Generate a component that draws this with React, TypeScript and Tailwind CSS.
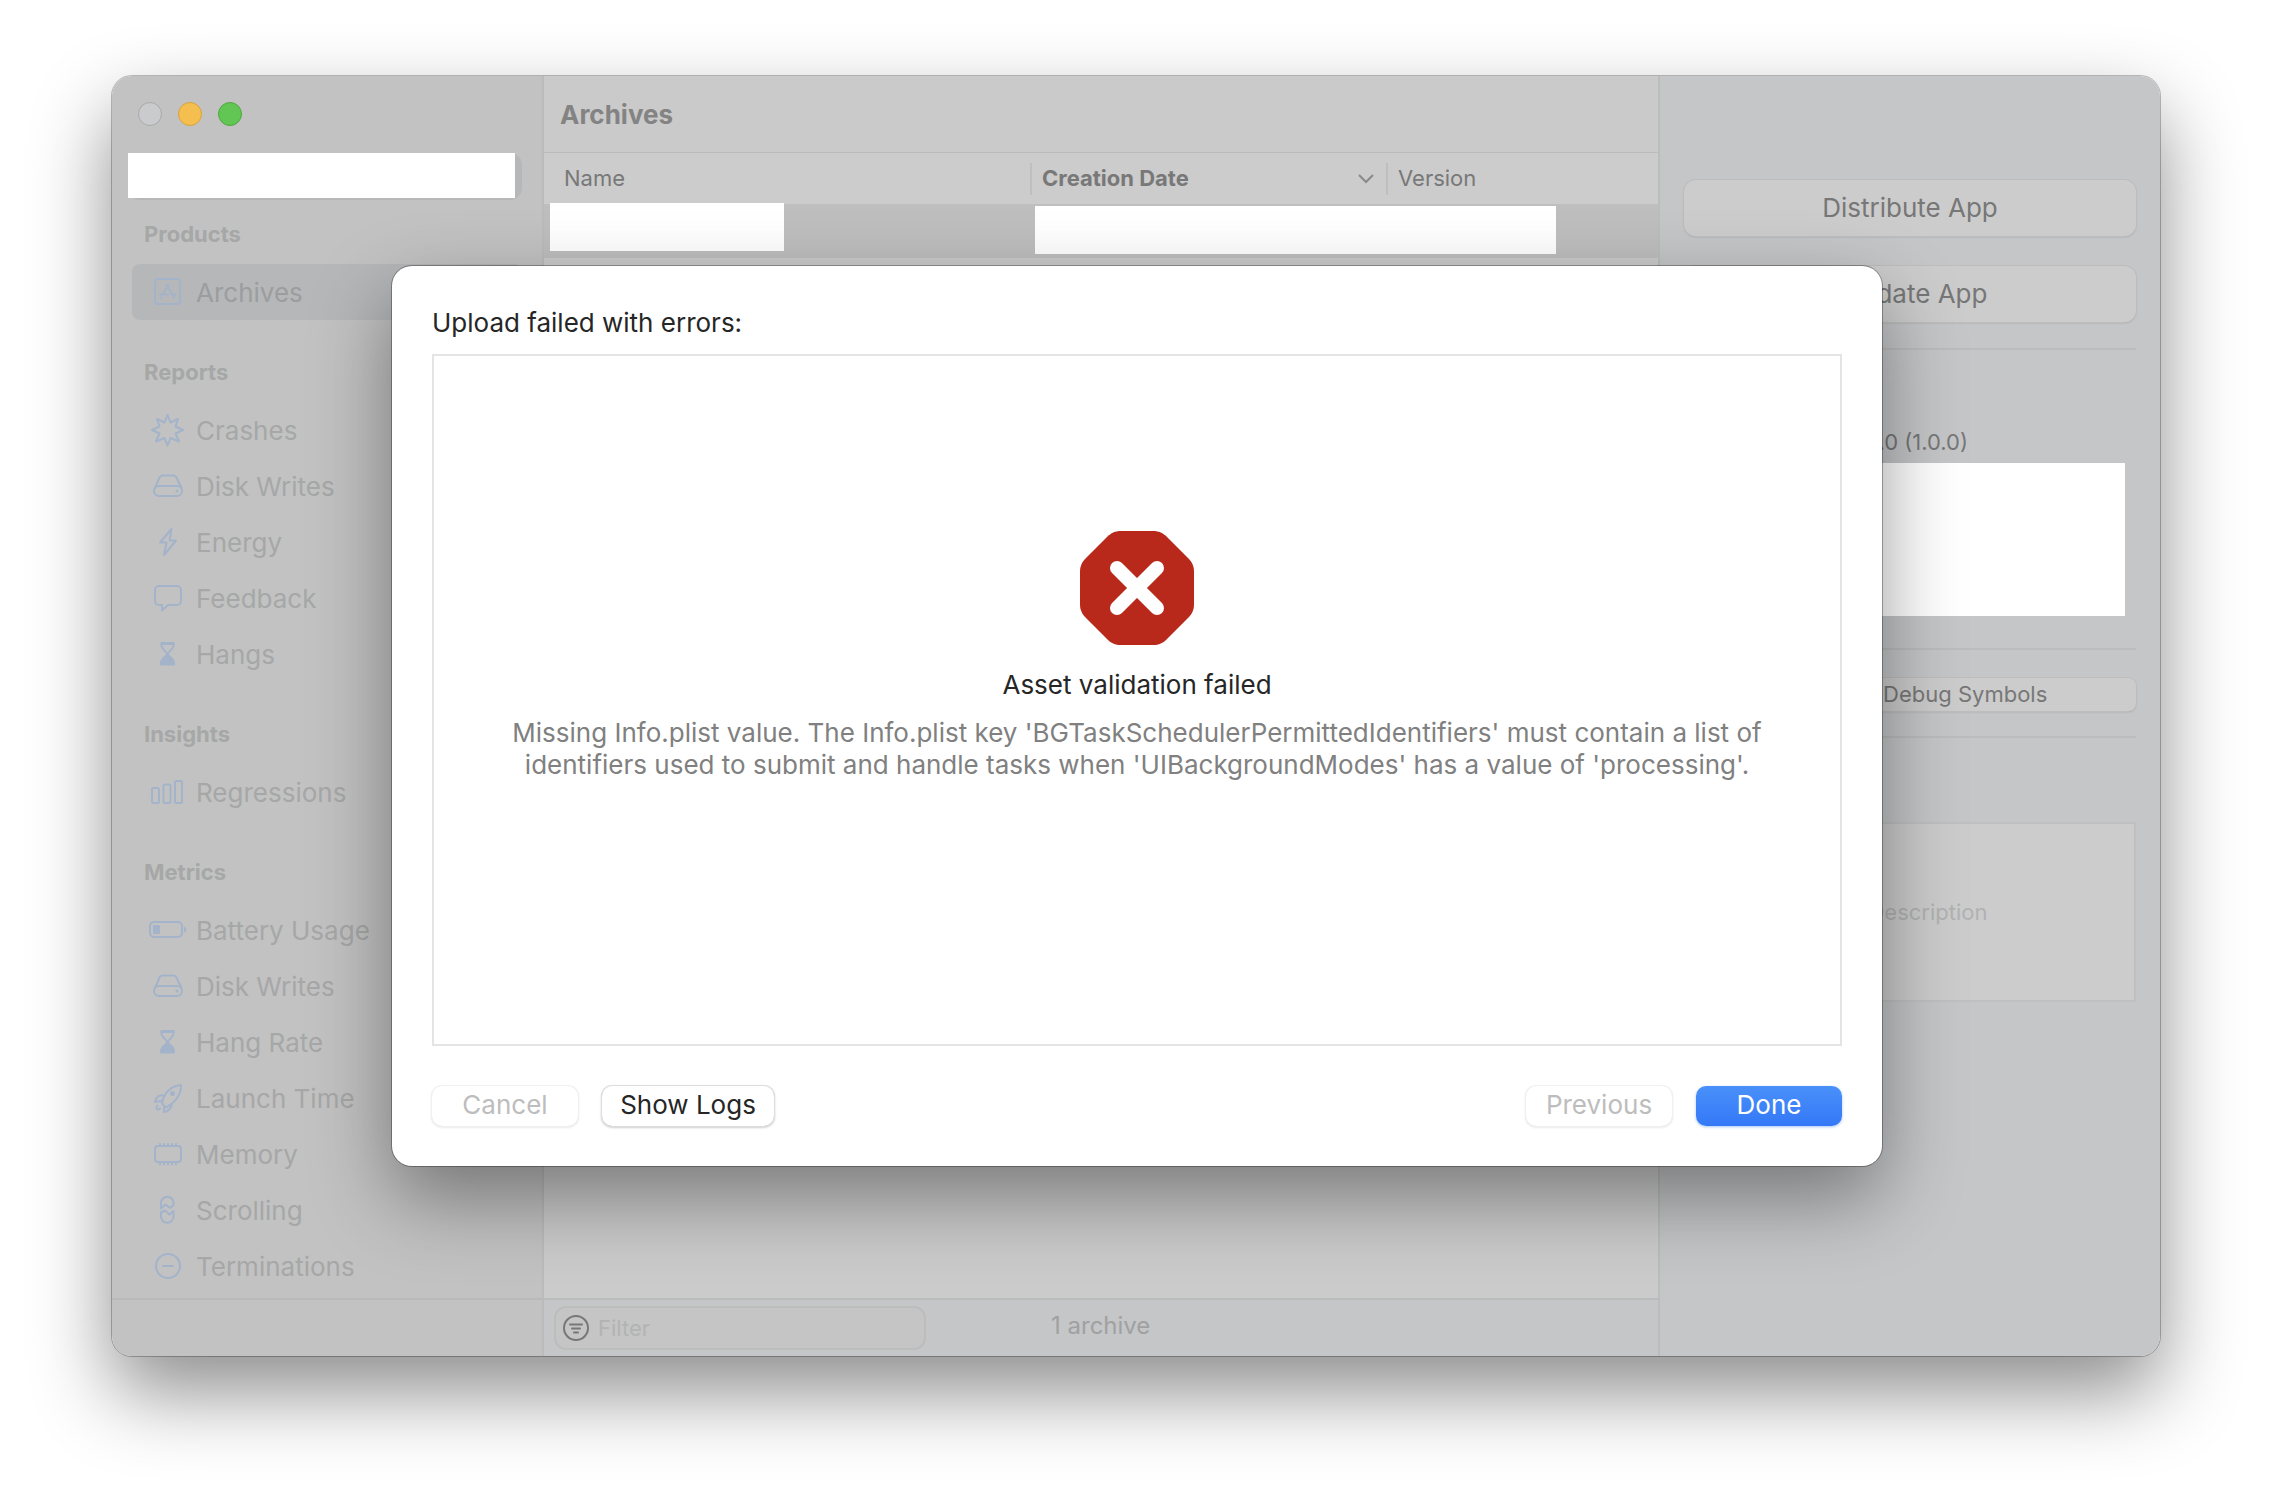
import type { ReactNode } from 'react';

type Item = { label: string; icon: ReactNode; active?: boolean };
type Section = { title: string; items: Item[] };

function Icon({ children }: { children: ReactNode }) {
  return (
    <svg
      className="h-10 w-10 shrink-0 text-[#a3b3ca]"
      viewBox="0 0 40 40"
      fill="none"
      stroke="currentColor"
      strokeWidth="2"
      strokeLinecap="round"
      strokeLinejoin="round"
      aria-hidden="true"
    >
      {children}
    </svg>
  );
}

const archivesIcon = (
  <Icon>
    <rect x="7" y="7" width="25" height="25" rx="3" />
    <path d="M18.500 13l7.500 12.500M20.500 13l-5.500 9.500M12 22.500h8M24.500 22.500h3M13.500 25.500l-.5 1" />
  </Icon>
);

const crashesIcon = (
  <Icon>
    <path d="M19.500 5l3 7.500 7.500-3.500-2.500 7.500 7.500 3.500-7.500 3.500 3.500 8-8.500-3.500-3 7.500-3-7.500-8.500 3.500 3.500-8-7.500-3.500 7.500-3.500-2.500-7.500 7.500 3.500z" />
  </Icon>
);

const diskIcon = (
  <Icon>
    <path d="M7 22l4.500-10.500c.6-1.400 1.500-2 3-2h11c1.500 0 2.400.6 3 2L33.500 22" />
    <rect x="6" y="20" width="28" height="10" rx="5" />
    <circle cx="29" cy="25" r="1.500" fill="currentColor" stroke="none" />
  </Icon>
);

const energyIcon = (
  <Icon>
    <path d="M23.500 7L12 20.500h6.500L16 33l12-14.500h-6.500z" />
  </Icon>
);

const feedbackIcon = (
  <Icon>
    <path d="M11 8h18a4 4 0 0 1 4 4v11a4 4 0 0 1-4 4h-9l-6 5.500V27h-3a4 4 0 0 1-4-4V12a4 4 0 0 1 4-4z" />
  </Icon>
);

const hangsIcon = (
  <Icon>
    <path d="M13.500 9h12v2.500c0 3-5 6.500-6 8.500-1-2-6-5.500-6-8.500z" />
    <path d="M12.500 9h14v2h-14z" fill="currentColor" stroke="none" />
    <path
      d="M19.500 20c1 2 6 4.500 6.500 8.500V30.500H13V28.500c.5-4 5.500-6.500 6.500-8.500z"
      fill="currentColor"
    />
  </Icon>
);

const regressionsIcon = (
  <Icon>
    <rect x="4" y="16" width="7" height="15" rx="1.500" />
    <rect x="15.500" y="12.500" width="7" height="18.500" rx="1.500" />
    <rect x="27" y="9" width="7" height="22" rx="1.500" />
  </Icon>
);

const batteryIcon = (
  <Icon>
    <rect x="2" y="12" width="32" height="15" rx="4" />
    <rect x="5" y="15" width="7" height="9" rx="1" fill="currentColor" stroke="none" />
    <path d="M36 16.500c3 1 3 5 0 6z" fill="currentColor" stroke="none" />
  </Icon>
);

const launchIcon = (
  <Icon>
    <path d="M14 25.500c1-7 6-17.500 19-18.500.5 11-8 19-15 22.500z" />
    <path d="M15.500 17.500c-5-1-8 2.500-8.500 6.500l6.500-1M23.500 26c.5 4-3 7.500-7.500 8v-5" />
    <path d="M9.500 27.500c-2 1.500-1 4 .5 4 1 0 1.500-.5 2-1" />
    <circle cx="24.500" cy="15.500" r="2.500" fill="currentColor" stroke="none" />
  </Icon>
);

const memoryIcon = (
  <Icon>
    <rect x="7" y="12" width="26" height="16" rx="3" />
    <path d="M12 10v1M16 10v1M20 10v1M24 10v1M28 10v1M12 29v1.500M16 29v1.500M20 29v1.500M24 29v1.500M28 29v1.500" />
  </Icon>
);

const scrollingIcon = (
  <Icon>
    <path d="M13 18.500V13a6 6 0 0 1 12.500 0v2l-3.500 3-4.500-3.500z" />
    <path d="M13 22.500V26.500a6 6 0 0 0 12.500 0v-5.500L21.500 24.500 17 20.500z" />
  </Icon>
);

const terminationsIcon = (
  <Icon>
    <circle cx="20" cy="20" r="12" />
    <path d="M15 20h10" />
  </Icon>
);

const sections: Section[] = [
  {
    title: 'Products',
    items: [{ label: 'Archives', icon: archivesIcon, active: true }],
  },
  {
    title: 'Reports',
    items: [
      { label: 'Crashes', icon: crashesIcon },
      { label: 'Disk Writes', icon: diskIcon },
      { label: 'Energy', icon: energyIcon },
      { label: 'Feedback', icon: feedbackIcon },
      { label: 'Hangs', icon: hangsIcon },
    ],
  },
  {
    title: 'Insights',
    items: [{ label: 'Regressions', icon: regressionsIcon }],
  },
  {
    title: 'Metrics',
    items: [
      { label: 'Battery Usage', icon: batteryIcon },
      { label: 'Disk Writes', icon: diskIcon },
      { label: 'Hang Rate', icon: hangsIcon },
      { label: 'Launch Time', icon: launchIcon },
      { label: 'Memory', icon: memoryIcon },
      { label: 'Scrolling', icon: scrollingIcon },
      { label: 'Terminations', icon: terminationsIcon },
    ],
  },
];

function Sidebar() {
  return (
    <aside className="flex w-[432px] shrink-0 flex-col border-r-2 border-[#babbbb] bg-[#c2c2c2]">
      <div className="flex h-[77px] items-center gap-4 pb-0.5 pl-[26px]">
        <button aria-label="Close" className="h-6 w-6 rounded-full border border-[#a9a9ab] bg-[#cacbcd]" />
        <button aria-label="Minimize" className="h-6 w-6 rounded-full border border-[#d9a13c] bg-[#f5bf4f]" />
        <button aria-label="Zoom" className="h-6 w-6 rounded-full border border-[#4ea73f] bg-[#62c655]" />
      </div>
      <div className="mr-5 ml-4 rounded-xl bg-[#b6b7b9] pr-[7px] pb-0.5">
        <div className="h-[45px] bg-white" />
      </div>
      <nav className="-mt-[18px] flex-1">
        {sections.map((section) => (
          <section key={section.title}>
            <h2 className="flex h-[82px] items-center pt-[22px] pl-8 text-[22px] font-bold text-[#a6a7a7]">
              {section.title}
            </h2>
            {section.items.map((item) => (
              <button
                key={item.label}
                className={`mx-5 flex h-14 w-[390px] items-center gap-2 rounded-lg pl-4 text-[26px] ${
                  item.active ? 'bg-[#b6b7b9] text-[#9c9d9e]' : 'text-[#a6a7a7]'
                }`}
              >
                {item.icon}
                {item.label}
              </button>
            ))}
          </section>
        ))}
      </nav>
      <div className="h-[58px] border-t-2 border-[#b9b9b9]" />
    </aside>
  );
}

function ArchivesPanel() {
  return (
    <main className="flex min-w-0 flex-1 flex-col bg-[#cbcbcb]">
      <h1 className="flex h-[77px] items-center border-b border-[#bcbcbc] bg-[#cacaca] pl-4 text-[26px] font-bold text-[#838383]">
        Archives
      </h1>
      <table className="w-full table-fixed text-left text-[22px] text-[#787878]">
        <thead className="border-b-2 border-[#bfbfbf] bg-[#cccccc]">
          <tr className="h-[52px]">
            <th scope="col" className="w-[488px] font-normal">
              <div className="flex h-8 items-center border-r-2 border-[#bfbfbf] pl-5">Name</div>
            </th>
            <th scope="col" className="w-[356px] font-bold">
              <div className="flex h-8 items-center justify-between border-r-2 border-[#bfbfbf] pr-3 pl-2.5">
                Creation Date
                <svg className="h-2.5 w-4" viewBox="0 0 16 10" fill="none" stroke="#8a8a8a" strokeWidth="2" aria-hidden="true">
                  <path d="M1 1l7 7 7-7" />
                </svg>
              </div>
            </th>
            <th scope="col" className="font-normal">
              <div className="flex h-8 items-center pl-2.5">Version</div>
            </th>
          </tr>
        </thead>
        <tbody>
          <tr className="h-[53px] bg-[#bebebe]">
            <td className="relative">
              <div className="absolute -top-[3px] left-1.5 h-12 w-[234px] bg-white" />
            </td>
            <td className="relative">
              <div className="absolute top-0 left-[3px] h-12 w-[521px] bg-white" />
            </td>
            <td />
          </tr>
        </tbody>
      </table>
      <footer className="mt-auto flex h-[58px] items-center border-t-2 border-[#bbbdbd] bg-[#c5c6c8] pl-2.5">
        <label className="flex h-11 w-[372px] items-center gap-2 rounded-xl border-2 border-[#bcbdbd] bg-[#c5c5c5] pl-1.5">
          <svg className="h-7 w-7 shrink-0" viewBox="0 0 28 28" fill="none" stroke="#777777" strokeWidth="2" strokeLinecap="round" aria-hidden="true">
            <circle cx="14" cy="14" r="12" />
            <path d="M8 10.500h12M10 14.500h8M12 18.500h4" />
          </svg>
          <input
            type="text"
            aria-label="Filter"
            placeholder="Filter"
            className="w-full bg-transparent text-[22px] outline-none placeholder:text-[#b2b3b3]"
          />
        </label>
        <span className="pb-1 pl-[125px] text-[24px] text-[#a0a1a1]">1 archive</span>
      </footer>
    </main>
  );
}

function Inspector() {
  return (
    <aside className="flex w-[502px] shrink-0 flex-col border-l-2 border-[#bbbdbd] bg-[#c5c6c8] px-6 pt-[104px]">
      <button className="h-14 rounded-xl bg-[#cccccc] pb-0.5 text-[26px] text-[#777777] shadow-[0_0_0_1px_#bdbdbd,0_1px_2px_#a0a0a0]">
        Distribute App
      </button>
      <button className="mt-[30px] h-14 rounded-xl bg-[#cccccc] pb-0.5 text-[26px] text-[#777777] shadow-[0_0_0_1px_#bdbdbd,0_1px_2px_#a0a0a0]">
        Validate App
      </button>
      <hr className="mt-[26px] border-t-2 border-[#bbbdbd]" />
      <p className="mt-[76px] h-8 pr-[168px] text-right text-[22px] leading-8 text-[#777777]">
        Version 1.0.0 (1.0.0)
      </p>
      <div className="mt-[5px] mr-[11px] h-[153px] bg-white" />
      <hr className="mt-8 border-t-2 border-[#bbbdbd]" />
      <button className="mt-7 h-[33px] rounded-lg bg-[#cccccc] pb-0.5 text-[22px] leading-8 text-[#777777] shadow-[0_0_0_1px_#bdbdbd,0_1px_2px_#a0a0a0]">
        Download Debug Symbols
      </button>
      <hr className="mt-[25px] border-t-2 border-[#bbbdbd]" />
      <textarea
        aria-label="Description"
        placeholder="No Description"
        className="mt-[84px] h-[180px] resize-none border-2 border-[#bfc0c0] bg-[#cccccc] py-[72px] text-center text-[22px] leading-8 outline-none placeholder:text-[#b1b2b2]"
      />
    </aside>
  );
}

function UploadDialog() {
  return (
    <div className="absolute inset-0 flex pt-[190px] pr-[278px] pb-[190px] pl-[280px]">
      <div
        role="dialog"
        aria-labelledby="dialog-title"
        className="flex flex-1 flex-col rounded-[20px] bg-white px-10 pt-10 pb-10 text-[#262626] shadow-[0_0_0_1px_rgba(0,0,0,0.3),0_32px_80px_rgba(0,0,0,0.4)]"
      >
        <h2 id="dialog-title" className="h-12 text-[26px] leading-[34px]">
          Upload failed with errors:
        </h2>
        <div className="flex flex-1 flex-col items-center border-2 border-[#e4e4e4] px-16 pt-[175px]">
          <svg className="h-[114px] w-[114px]" viewBox="0 0 114 114" aria-hidden="true">
            <path
              d="M41 0h32c6 0 10 2 14 6l21 21c4 4 6 8 6 14v32c0 6-2 10-6 14l-21 21c-4 4-8 6-14 6H41c-6 0-10-2-14-6L6 87c-4-4-6-8-6-14V41c0-6 2-10 6-14L27 6c4-4 8-6 14-6z"
              fill="#b8291b"
            />
            <path d="M37 37l40 40M77 37L37 77" stroke="#fff" strokeWidth="14" strokeLinecap="round" />
          </svg>
          <h3 className="mt-6 text-[26px] leading-8">Asset validation failed</h3>
          <p className="mt-4 text-center text-[26px] leading-8 text-[#808080]">
            Missing Info.plist value. The Info.plist key 'BGTaskSchedulerPermittedIdentifiers' must contain a list of
            identifiers used to submit and handle tasks when 'UIBackgroundModes' has a value of 'processing'.
          </p>
        </div>
        <div className="mt-10 flex h-10 text-[26px] leading-[38px]">
          <button
            disabled
            className="w-[146px] rounded-[10px] pb-0.5 text-[#bdbdbd] shadow-[0_0_0_1px_#f0f0f0,0_1px_3px_#d4d4d4]"
          >
            Cancel
          </button>
          <button className="ml-6 w-[172px] rounded-[10px] pb-0.5 shadow-[0_0_0_1px_#dedede,0_1px_3px_#a0a0a0]">
            Show Logs
          </button>
          <button
            disabled
            className="ml-auto w-[146px] rounded-[10px] pb-0.5 text-[#bdbdbd] shadow-[0_0_0_1px_#f0f0f0,0_1px_3px_#d4d4d4]"
          >
            Previous
          </button>
          <button className="ml-6 w-[146px] rounded-[10px] bg-linear-to-b from-[#4a90fa] to-[#3478f7] pb-0.5 text-white shadow-[0_1px_3px_#a9c5f5]">
            Done
          </button>
        </div>
      </div>
    </div>
  );
}

export default function App() {
  return (
    <div className="flex min-h-screen bg-white px-28 pt-[76px] pb-[148px] font-['Inter','Liberation_Sans',sans-serif]">
      <div className="relative flex flex-1 rounded-[20px] shadow-[0_0_0_1px_rgba(0,0,0,0.25),0_36px_80px_rgba(0,0,0,0.45)]">
        <div className="flex min-w-0 flex-1 overflow-hidden rounded-[20px]">
          <Sidebar />
          <ArchivesPanel />
          <Inspector />
        </div>
        <UploadDialog />
      </div>
    </div>
  );
}
